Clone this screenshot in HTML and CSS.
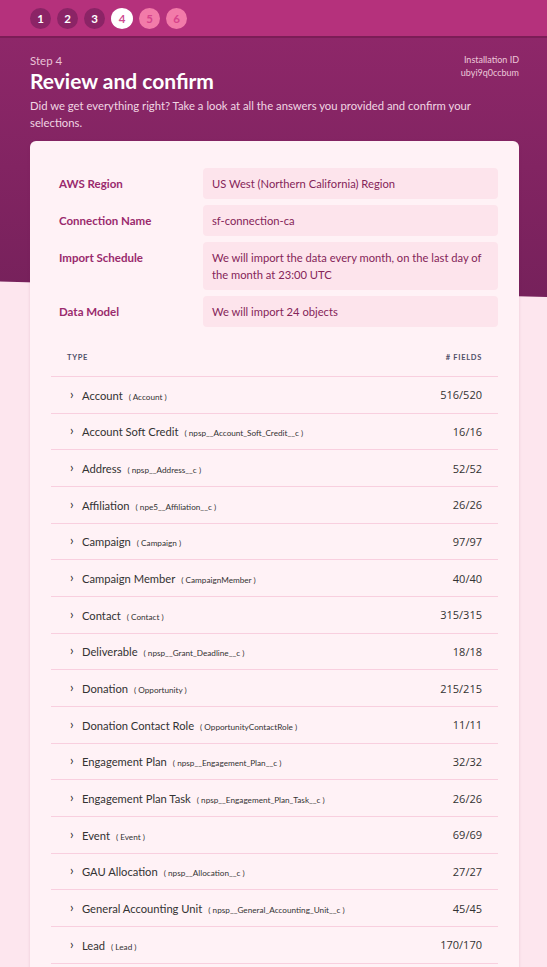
FILE: index.html
```html
<!DOCTYPE html>
<html>
<head>
<meta charset="utf-8">
<link rel="stylesheet" href="styles.css">
</head>
<body>
<div class="topbar">
  <div class="steps">
    <span class="step done">1</span>
    <span class="step done">2</span>
    <span class="step done">3</span>
    <span class="step current">4</span>
    <span class="step todo">5</span>
    <span class="step todo">6</span>
  </div>
</div>
<div class="hero">
  <div class="hero-top">
    <div>
      <div class="step-label">Step 4</div>
      <h1 class="title">Review and confirm</h1>
    </div>
    <div class="install">
      <div>Installation ID</div>
      <div>ubyi9q0ccbum</div>
    </div>
  </div>
  <p class="desc">Did we get everything right? Take a look at all the answers you provided and confirm your selections.</p>
</div>
<div class="content">
  <div class="card">
    <div class="fields">
      <div class="f-label">AWS Region</div>
      <div class="f-value">US West (Northern California) Region</div>
      <div class="f-label">Connection Name</div>
      <div class="f-value">sf-connection-ca</div>
      <div class="f-label">Import Schedule</div>
      <div class="f-value">We will import the data every month, on the last day of the month at 23:00 UTC</div>
      <div class="f-label">Data Model</div>
      <div class="f-value">We will import 24 objects</div>
    </div>
    <div class="table">
      <div class="thead"><span>Type</span><span># Fields</span></div>
      <div class="row"><span class="name"><span class="chev">›</span>Account<small>( Account )</small></span><span class="num">516/520</span></div>
      <div class="row"><span class="name"><span class="chev">›</span>Account Soft Credit<small>( npsp__Account_Soft_Credit__c )</small></span><span class="num">16/16</span></div>
      <div class="row"><span class="name"><span class="chev">›</span>Address<small>( npsp__Address__c )</small></span><span class="num">52/52</span></div>
      <div class="row"><span class="name"><span class="chev">›</span>Affiliation<small>( npe5__Affiliation__c )</small></span><span class="num">26/26</span></div>
      <div class="row"><span class="name"><span class="chev">›</span>Campaign<small>( Campaign )</small></span><span class="num">97/97</span></div>
      <div class="row"><span class="name"><span class="chev">›</span>Campaign Member<small>( CampaignMember )</small></span><span class="num">40/40</span></div>
      <div class="row"><span class="name"><span class="chev">›</span>Contact<small>( Contact )</small></span><span class="num">315/315</span></div>
      <div class="row"><span class="name"><span class="chev">›</span>Deliverable<small>( npsp__Grant_Deadline__c )</small></span><span class="num">18/18</span></div>
      <div class="row"><span class="name"><span class="chev">›</span>Donation<small>( Opportunity )</small></span><span class="num">215/215</span></div>
      <div class="row"><span class="name"><span class="chev">›</span>Donation Contact Role<small>( OpportunityContactRole )</small></span><span class="num">11/11</span></div>
      <div class="row"><span class="name"><span class="chev">›</span>Engagement Plan<small>( npsp__Engagement_Plan__c )</small></span><span class="num">32/32</span></div>
      <div class="row"><span class="name"><span class="chev">›</span>Engagement Plan Task<small>( npsp__Engagement_Plan_Task__c )</small></span><span class="num">26/26</span></div>
      <div class="row"><span class="name"><span class="chev">›</span>Event<small>( Event )</small></span><span class="num">69/69</span></div>
      <div class="row"><span class="name"><span class="chev">›</span>GAU Allocation<small>( npsp__Allocation__c )</small></span><span class="num">27/27</span></div>
      <div class="row"><span class="name"><span class="chev">›</span>General Accounting Unit<small>( npsp__General_Accounting_Unit__c )</small></span><span class="num">45/45</span></div>
      <div class="row"><span class="name"><span class="chev">›</span>Lead<small>( Lead )</small></span><span class="num">170/170</span></div>
    </div>
  </div>
</div>
</body>
</html>
```

FILE: styles.css
```css
* { box-sizing: border-box; }
html, body { margin: 0; padding: 0; }
body {
  font-family: Lato, "Open Sans", "Liberation Sans", sans-serif;
  background: #fde6ee;
  width: 547px;
  height: 967px;
  overflow: hidden;
  position: relative;
}
.topbar {
  height: 38px;
  background: #b5317c;
  border-bottom: 2px solid #7c1d57;
  padding: 8px 0 0 30px;
  position: relative;
  z-index: 2;
}
.steps { display: flex; gap: 6px; }
.step {
  width: 21px; height: 21px;
  border-radius: 50%;
  display: flex; align-items: center; justify-content: center;
  font-size: 11.5px; font-weight: 700;
}
.step.current { width: 22px; }
.step.done { background: #8b2466; color: #fff; }
.step.current { background: #fff; color: #cf4a91; }
.step.todo { background: #f27ba9; color: #d6438c; }
.hero {
  background: linear-gradient(180deg, #8e2769 0%, #76215b 100%);
  height: 260px;
  margin-top: -1px;
  padding: 16px 28px 0 30px;
  clip-path: polygon(0 0, 100% 0, 100% 100%, 0 94%);
  color: #fff;
}
.hero-top { display: flex; justify-content: space-between; align-items: flex-start; }
.step-label { font-size: 11.5px; color: #e9c2d6; line-height: 15px; }
.title { margin: 0; font-size: 21px; font-weight: 700; line-height: 26px; color: #fff; }
.install { text-align: right; font-size: 9px; line-height: 13px; color: #ecc8da; padding-top: 0; }
.desc { margin: 3px 0 0; font-size: 11.3px; line-height: 17px; color: #f1d6e3; max-width: 480px; }
.content {
  position: absolute;
  left: 30px; top: 141px;
  width: 489px;
}
.card {
  background: #fff2f6;
  border-radius: 6px;
  padding: 27px 21px 20px 21px;
  box-shadow: 0 1px 3px rgba(120, 30, 80, 0.15);
  height: 900px;
}
.fields {
  display: grid;
  grid-template-columns: 144px 1fr;
  row-gap: 6px;
  padding-left: 8px;
}
.f-label {
  font-size: 11.5px; font-weight: 700; color: #9a2a6d;
  padding-top: 9px;
}
.f-value {
  background: #fde4ec;
  border-radius: 4px;
  padding: 7px 9px;
  font-size: 11.2px;
  line-height: 17px;
  color: #852559;
  min-height: 31px;
}
.table { margin-top: 23px; }
.thead {
  display: flex; justify-content: space-between;
  padding: 3px 16px 0 16px;
  height: 27px;
  border-bottom: 1px solid #f9cfdf;
  font-size: 7.5px; font-weight: 700; letter-spacing: 0.7px;
  text-transform: uppercase; color: #4f4f68;
}
.row {
  display: flex; justify-content: space-between; align-items: center;
  height: 36.67px;
  border-bottom: 1px solid #f9cfdf;
  padding: 0 16px 0 19px;
  font-size: 11.2px; color: #333;
}
.name { display: flex; align-items: baseline; }
.chev { font-size: 13px; font-weight: 400; width: 12px; color: #333; position: relative; top: -1px; }
.name small { font-size: 8.2px; margin-left: 6px; color: #333; }
.num { color: #333; font-family: "Open Sans", Lato, sans-serif; font-size: 11px; }
```
